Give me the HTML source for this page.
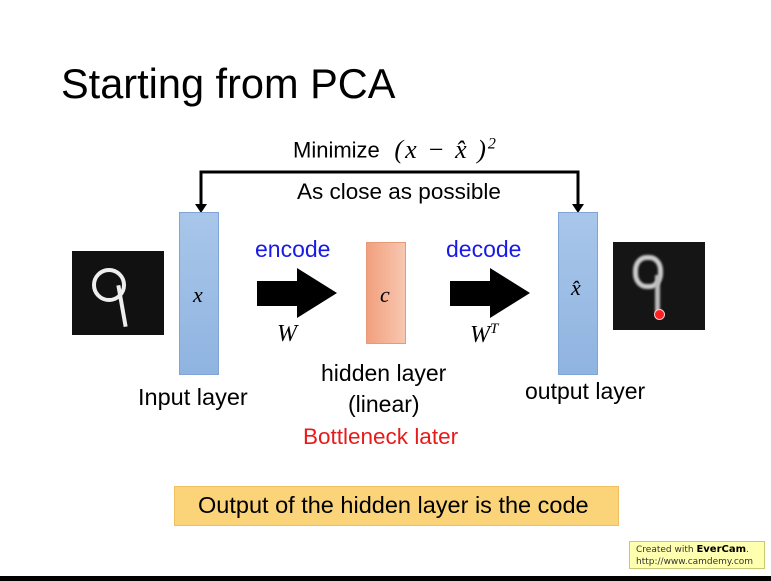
<!DOCTYPE html>
<html><head><meta charset="utf-8"><style>
body{margin:0;width:771px;height:581px;background:#fff;position:relative;overflow:hidden;font-family:"Liberation Sans",sans-serif;color:#000}
.a{position:absolute;white-space:nowrap;line-height:1}
.m{font-family:"Liberation Serif",serif;font-style:italic}
.bar{position:absolute;background:linear-gradient(180deg,#a9c6ea,#8fb4e0);border:1px solid #7fa5d6;box-sizing:border-box}
</style></head><body>
<div class="a" style="left:61px;top:63px;font-size:41.5px">Starting from PCA</div>
<div class="a" style="left:293px;top:136px;font-size:22px">Minimize <span class="m" style="font-size:26px;letter-spacing:2px">&nbsp;(x − x̂ )<sup style="font-size:16px">2</sup></span></div>
<svg class="a" style="left:0;top:0" width="771" height="581">
<polyline points="201,208 201,172 578,172 578,208" fill="none" stroke="#000" stroke-width="3"/>
<polygon points="195,204 207,204 201,213" fill="#000"/>
<polygon points="572,204 584,204 578,213" fill="#000"/>
<polygon points="257,281 297,281 297,268 337,293 297,318 297,306 257,306" fill="#000"/>
<polygon points="450,281 490,281 490,268 530,293 490,318 490,306 450,306" fill="#000"/>
</svg>
<div class="a" style="left:297px;top:181px;font-size:22.5px">As close as possible</div>
<div class="a" style="left:72px;top:251px;width:92px;height:84px;background:#111"></div>
<div class="a" style="left:92px;top:268px;width:34px;height:34px;border:4px solid #eee;border-radius:50%;box-sizing:border-box"></div>
<div class="a" style="left:120px;top:285px;width:4px;height:42px;background:#eee;transform:rotate(-10deg)"></div>
<div class="bar" style="left:179px;top:212px;width:40px;height:163px"></div>
<div class="a m" style="left:193px;top:284px;font-size:22px">x</div>
<div class="a" style="left:255px;top:238px;font-size:23px;color:#1a1ae6">encode</div>
<div class="a m" style="left:277px;top:322px;font-size:24px">W</div>
<div class="a" style="left:366px;top:242px;width:40px;height:102px;background:linear-gradient(90deg,#f2a07e,#f7c7b0);border:1px solid #e89a78;box-sizing:border-box"></div>
<div class="a m" style="left:380px;top:284px;font-size:22px">c</div>
<div class="a" style="left:446px;top:238px;font-size:23px;color:#1a1ae6">decode</div>
<div class="a m" style="left:470px;top:322px;font-size:24px">W<sup style="font-size:15px">T</sup></div>
<div class="bar" style="left:558px;top:212px;width:40px;height:163px"></div>
<div class="a m" style="left:571px;top:277px;font-size:22px">x̂</div>
<div class="a" style="left:613px;top:242px;width:92px;height:88px;background:#151515"></div>
<div class="a" style="left:633px;top:255px;width:30px;height:34px;border:5px solid #ccc;border-radius:45%;box-sizing:border-box;filter:blur(1px)"></div>
<div class="a" style="left:655px;top:275px;width:5px;height:38px;background:#bbb;filter:blur(1px)"></div>
<div class="a" style="left:654px;top:309px;width:9px;height:9px;border-radius:50%;background:#f22;border:1px solid #fcc"></div>
<div class="a" style="left:138px;top:386px;font-size:23.5px">Input layer</div>
<div class="a" style="left:321px;top:362px;font-size:23px">hidden layer</div>
<div class="a" style="left:348px;top:393px;font-size:23px">(linear)</div>
<div class="a" style="left:303px;top:426px;font-size:22.5px;color:#e81b1b">Bottleneck later</div>
<div class="a" style="left:525px;top:380px;font-size:23px">output layer</div>
<div class="a" style="left:174px;top:486px;width:445px;height:40px;background:#fbd47a;border:1px solid #f0c060;box-sizing:border-box"></div>
<div class="a" style="left:198px;top:494px;font-size:23.5px">Output of the hidden layer is the code</div>
<div class="a" style="left:629px;top:541px;width:136px;height:28px;background:#ffffb0;border:1px solid #c8c870;box-sizing:border-box;font-family:'DejaVu Sans',sans-serif;font-size:9px;color:#333;line-height:12px;padding:2px 0 0 6px;white-space:nowrap">Created with <b style="font-size:10px;color:#000">EverCam</b>.<br>http://www.camdemy.com</div>
<div class="a" style="left:0;top:576px;width:771px;height:5px;background:#000"></div>
</body></html>
